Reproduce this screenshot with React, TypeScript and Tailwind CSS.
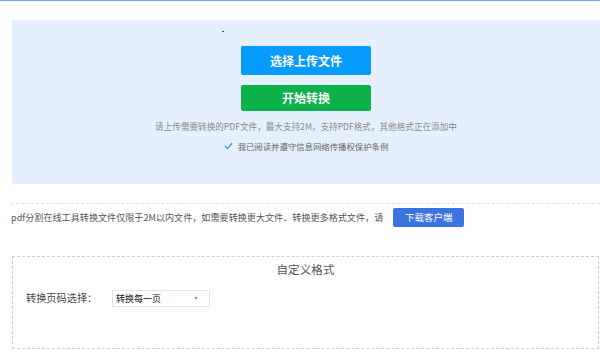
export default function App() {
  return (
    <div
      className="w-[600px] h-[351px] overflow-hidden bg-white"
      style={{ fontFamily: '"Noto Sans CJK SC", "Noto Sans", sans-serif' }}
    >
      <div className="h-px bg-[#7ba2ea]" />
      <div className="pl-[12px] pt-[19px]">
        {/* upload panel */}
        <div className="relative h-[164px] bg-[#e4f0fd] flex flex-col items-center">
          <span className="absolute left-[210px] top-[11px] w-[2px] h-[1px] bg-[#555]" />
          <button className="mt-[26px] w-[130px] h-[29px] rounded-[2px] bg-[#079bfd] text-white text-[12px] font-bold leading-none">
            选择上传文件
          </button>
          <button className="mt-[10px] w-[130px] h-[26px] rounded-[2px] bg-[#0db14a] text-white text-[12px] font-bold leading-none">
            开始转换
          </button>
          <p className="mt-[11px] text-[8.6px] leading-none text-[#8a8a8a] whitespace-nowrap">
            请上传需要转换的PDF文件，最大支持2M，支持PDF格式，其他格式正在添加中
          </p>
          <div className="mt-[11px] flex items-center gap-[5px] text-[8.4px] leading-none text-[#666]">
            <svg width="9" height="8" viewBox="0 0 9 8" fill="none">
              <path d="M1 4 L3.6 6.6 L8 1.2" stroke="#3b8ee8" strokeWidth="1.3" />
            </svg>
            <span className="whitespace-nowrap">我已阅读并遵守信息网络传播权保护条例</span>
          </div>
        </div>
      </div>

      {/* notice row */}
      <div className="ml-[11px] mt-[19px] border-t border-dashed border-[#e2e2e2] pt-[4px] flex items-center h-[24px]">
        <span className="text-[9.1px] text-[#555] whitespace-nowrap leading-none">
          pdf分割在线工具转换文件仅限于2M以内文件，如需要转换更大文件、转换更多格式文件，请
        </span>
        <button className="ml-[10px] w-[71px] h-[19px] rounded-[2px] bg-[#3b74e0] text-white text-[9.5px] leading-none">
          下载客户端
        </button>
      </div>

      {/* custom format */}
      <div className="ml-[12px] mt-[29px] w-[587px] h-[93px] border border-dashed border-[#cfcfcf]">
        <div className="text-center text-[11.6px] text-[#555] leading-none mt-[7px]">自定义格式</div>
        <div className="mt-[14px] ml-[13px] flex items-center">
          <span className="text-[10.2px] text-[#444] leading-none w-[86px] whitespace-nowrap">转换页码选择：</span>
          <div className="w-[98px] h-[17px] border border-[#e3e3e3] bg-white flex items-center justify-between pl-[3px] pr-[11px]">
            <span className="text-[9px] text-[#111] leading-none">转换每一页</span>
            <span className="w-0 h-0 border-l-[2.5px] border-r-[2.5px] border-t-[3px] border-l-transparent border-r-transparent border-t-[#999]" />
          </div>
        </div>
      </div>
    </div>
  );
}
